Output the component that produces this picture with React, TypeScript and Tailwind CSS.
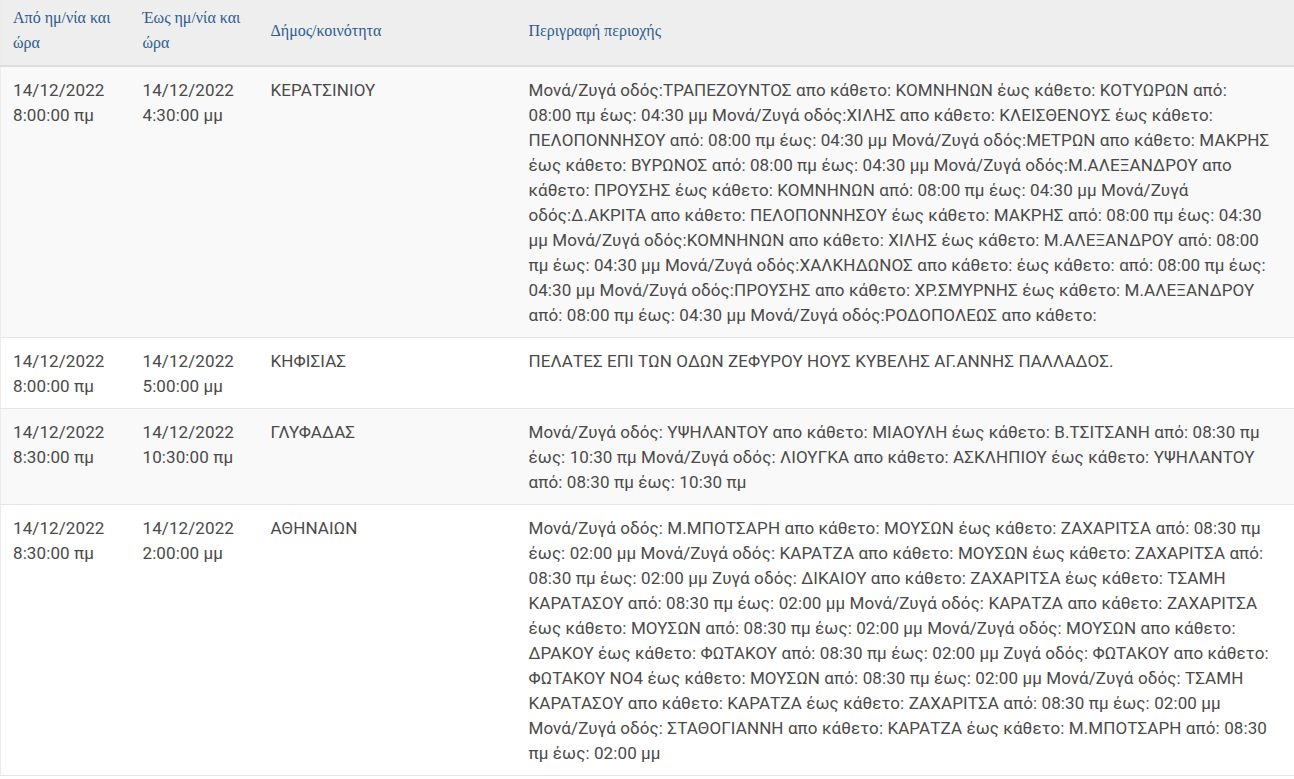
// line breaks follow the reference rendering
const rows = [
  {
    from: ["14/12/2022", "8:00:00 πμ"],
    to: ["14/12/2022", "4:30:00 μμ"],
    area: "ΚΕΡΑΤΣΙΝΙΟΥ",
    desc: [
      "Μονά/Ζυγά οδός:ΤΡΑΠΕΖΟΥΝΤΟΣ απο κάθετο: ΚΟΜΝΗΝΩΝ έως κάθετο: ΚΟΤΥΩΡΩΝ από:",
      "08:00 πμ έως: 04:30 μμ Μονά/Ζυγά οδός:ΧΙΛΗΣ απο κάθετο: ΚΛΕΙΣΘΕΝΟΥΣ έως κάθετο:",
      "ΠΕΛΟΠΟΝΝΗΣΟΥ από: 08:00 πμ έως: 04:30 μμ Μονά/Ζυγά οδός:ΜΕΤΡΩΝ απο κάθετο: ΜΑΚΡΗΣ",
      "έως κάθετο: ΒΥΡΩΝΟΣ από: 08:00 πμ έως: 04:30 μμ Μονά/Ζυγά οδός:Μ.ΑΛΕΞΑΝΔΡΟΥ απο",
      "κάθετο: ΠΡΟΥΣΗΣ έως κάθετο: ΚΟΜΝΗΝΩΝ από: 08:00 πμ έως: 04:30 μμ Μονά/Ζυγά",
      "οδός:Δ.ΑΚΡΙΤΑ απο κάθετο: ΠΕΛΟΠΟΝΝΗΣΟΥ έως κάθετο: ΜΑΚΡΗΣ από: 08:00 πμ έως: 04:30",
      "μμ Μονά/Ζυγά οδός:ΚΟΜΝΗΝΩΝ απο κάθετο: ΧΙΛΗΣ έως κάθετο: Μ.ΑΛΕΞΑΝΔΡΟΥ από: 08:00",
      "πμ έως: 04:30 μμ Μονά/Ζυγά οδός:ΧΑΛΚΗΔΩΝΟΣ απο κάθετο: έως κάθετο: από: 08:00 πμ έως:",
      "04:30 μμ Μονά/Ζυγά οδός:ΠΡΟΥΣΗΣ απο κάθετο: ΧΡ.ΣΜΥΡΝΗΣ έως κάθετο: Μ.ΑΛΕΞΑΝΔΡΟΥ",
      "από: 08:00 πμ έως: 04:30 μμ Μονά/Ζυγά οδός:ΡΟΔΟΠΟΛΕΩΣ απο κάθετο:",
    ],
  },
  {
    from: ["14/12/2022", "8:00:00 πμ"],
    to: ["14/12/2022", "5:00:00 μμ"],
    area: "ΚΗΦΙΣΙΑΣ",
    desc: ["ΠΕΛΑΤΕΣ ΕΠΙ ΤΩΝ ΟΔΩΝ ΖΕΦΥΡΟΥ ΗΟΥΣ ΚΥΒΕΛΗΣ ΑΓ.ΑΝΝΗΣ ΠΑΛΛΑΔΟΣ."],
  },
  {
    from: ["14/12/2022", "8:30:00 πμ"],
    to: ["14/12/2022", "10:30:00 πμ"],
    area: "ΓΛΥΦΑΔΑΣ",
    desc: [
      "Μονά/Ζυγά οδός: ΥΨΗΛΑΝΤΟΥ απο κάθετο: ΜΙΑΟΥΛΗ έως κάθετο: Β.ΤΣΙΤΣΑΝΗ από: 08:30 πμ",
      "έως: 10:30 πμ Μονά/Ζυγά οδός: ΛΙΟΥΓΚΑ απο κάθετο: ΑΣΚΛΗΠΙΟΥ έως κάθετο: ΥΨΗΛΑΝΤΟΥ",
      "από: 08:30 πμ έως: 10:30 πμ",
    ],
  },
  {
    from: ["14/12/2022", "8:30:00 πμ"],
    to: ["14/12/2022", "2:00:00 μμ"],
    area: "ΑΘΗΝΑΙΩΝ",
    desc: [
      "Μονά/Ζυγά οδός: Μ.ΜΠΟΤΣΑΡΗ απο κάθετο: ΜΟΥΣΩΝ έως κάθετο: ΖΑΧΑΡΙΤΣΑ από: 08:30 πμ",
      "έως: 02:00 μμ Μονά/Ζυγά οδός: ΚΑΡΑΤΖΑ απο κάθετο: ΜΟΥΣΩΝ έως κάθετο: ΖΑΧΑΡΙΤΣΑ από:",
      "08:30 πμ έως: 02:00 μμ Ζυγά οδός: ΔΙΚΑΙΟΥ απο κάθετο: ΖΑΧΑΡΙΤΣΑ έως κάθετο: ΤΣΑΜΗ",
      "ΚΑΡΑΤΑΣΟΥ από: 08:30 πμ έως: 02:00 μμ Μονά/Ζυγά οδός: ΚΑΡΑΤΖΑ απο κάθετο: ΖΑΧΑΡΙΤΣΑ",
      "έως κάθετο: ΜΟΥΣΩΝ από: 08:30 πμ έως: 02:00 μμ Μονά/Ζυγά οδός: ΜΟΥΣΩΝ απο κάθετο:",
      "ΔΡΑΚΟΥ έως κάθετο: ΦΩΤΑΚΟΥ από: 08:30 πμ έως: 02:00 μμ Ζυγά οδός: ΦΩΤΑΚΟΥ απο κάθετο:",
      "ΦΩΤΑΚΟΥ ΝΟ4 έως κάθετο: ΜΟΥΣΩΝ από: 08:30 πμ έως: 02:00 μμ Μονά/Ζυγά οδός: ΤΣΑΜΗ",
      "ΚΑΡΑΤΑΣΟΥ απο κάθετο: ΚΑΡΑΤΖΑ έως κάθετο: ΖΑΧΑΡΙΤΣΑ από: 08:30 πμ έως: 02:00 μμ",
      "Μονά/Ζυγά οδός: ΣΤΑΘΟΓΙΑΝΝΗ απο κάθετο: ΚΑΡΑΤΖΑ έως κάθετο: Μ.ΜΠΟΤΣΑΡΗ από: 08:30",
      "πμ έως: 02:00 μμ",
    ],
  },
];

function Lines({ lines }: { lines: string[] }) {
  return (
    <>
      {lines.map((l, i) => (
        <span key={i} className="block whitespace-nowrap">
          {l}
        </span>
      ))}
    </>
  );
}

export default function App() {
  return (
    <div className="min-h-screen bg-white">
      <table className="w-[1294px] table-fixed border-collapse border-l border-[#ececec] font-['Roboto',sans-serif] text-[17px] leading-[25px] tracking-[0.1px] text-[#4a4a4a]">
        <colgroup>
          <col className="w-[130px]" />
          <col className="w-[128px]" />
          <col className="w-[258px]" />
          <col />
        </colgroup>
        <thead>
          <tr className="border-b-2 border-[#dddddd] bg-[#eeeeee] font-['Liberation_Serif',serif] text-[16px] leading-[25px] tracking-normal text-[#2c5b8e]">
            <th className="px-3 pt-[5px] pb-[10px] text-left align-middle font-normal">Από ημ/νία και ώρα</th>
            <th className="px-3 pt-[5px] pb-[10px] text-left align-middle font-normal">Έως ημ/νία και ώρα</th>
            <th className="px-3 pt-[5px] pb-[10px] text-left align-middle font-normal">Δήμος/κοινότητα</th>
            <th className="px-3 pt-[5px] pb-[10px] text-left align-middle font-normal">Περιγραφή περιοχής</th>
          </tr>
        </thead>
        <tbody>
          {rows.map((r, i) => (
            <tr key={i} className={`border-b border-[#e6e6e6] ${i % 2 === 0 ? "bg-[#f9f9f9]" : "bg-white"}`}>
              <td className="px-3 pt-[11px] pb-[9px] align-top">
                <Lines lines={r.from} />
              </td>
              <td className="px-3 pt-[11px] pb-[9px] align-top">
                <Lines lines={r.to} />
              </td>
              <td className="px-3 pt-[11px] pb-[9px] align-top">{r.area}</td>
              <td className="px-3 pt-[11px] pb-[9px] align-top">
                <Lines lines={r.desc} />
              </td>
            </tr>
          ))}
        </tbody>
      </table>
    </div>
  );
}
